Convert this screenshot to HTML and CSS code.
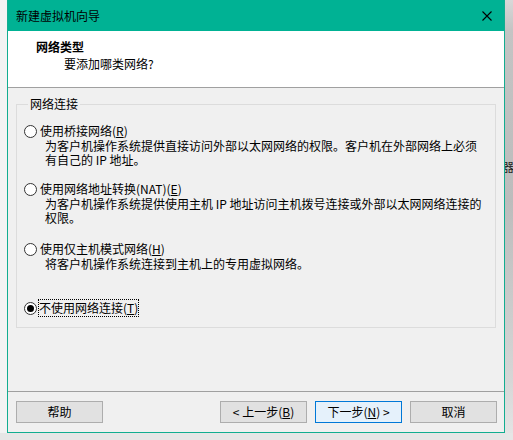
FILE: index.html
```html
<!DOCTYPE html>
<html lang="zh-CN">
<head>
<meta charset="utf-8">
<title>新建虚拟机向导</title>
<link rel="stylesheet" href="styles.css">
</head>
<body>
<div class="screen">
  <div class="left-strip"></div>
  <div class="window">
    <div class="titlebar">
      <span class="title">新建虚拟机向导</span>
      <svg class="close" width="10" height="10" viewBox="0 0 10 10"><path d="M0.5 0.5 L9.5 9.5 M9.5 0.5 L0.5 9.5" stroke="#000" stroke-width="1.1" fill="none"/></svg>
    </div>
    <div class="header">
      <div class="h-title">网络类型</div>
      <div class="h-sub">要添加哪类网络?</div>
    </div>
    <div class="body">
      <fieldset class="group">
        <legend>网络连接</legend>
        <div class="opt opt1">
          <div class="row"><span class="radio"></span><span class="lbl">使用桥接网络(<u>R</u>)</span></div>
          <div class="desc">为客户机操作系统提供直接访问外部以太网网络的权限。客户机在外部网络上必须<br>有自己的 IP 地址。</div>
        </div>
        <div class="opt opt2">
          <div class="row"><span class="radio"></span><span class="lbl">使用网络地址转换(NAT)(<u>E</u>)</span></div>
          <div class="desc">为客户机操作系统提供使用主机 IP 地址访问主机拨号连接或外部以太网网络连接的<br>权限。</div>
        </div>
        <div class="opt opt3">
          <div class="row"><span class="radio"></span><span class="lbl">使用仅主机模式网络(<u>H</u>)</span></div>
          <div class="desc">将客户机操作系统连接到主机上的专用虚拟网络。</div>
        </div>
        <div class="opt opt4">
          <div class="row"><span class="radio checked"></span><span class="lbl focus">不使用网络连接(<u>T</u>)</span></div>
        </div>
      </fieldset>
    </div>
    <div class="footer">
      <button class="btn">帮助</button>
      <span class="spacer"></span>
      <button class="btn">&lt; 上一步(<u>B</u>)</button>
      <button class="btn primary">下一步(<u>N</u>) &gt;</button>
      <button class="btn">取消</button>
    </div>
  </div>
  <div class="right-strip"><span class="frag">器</span></div>
</div>
</body>
</html>
```
FILE: styles.css
```css
* { box-sizing: border-box; }
html, body { margin: 0; padding: 0; }
body {
  width: 513px;
  height: 440px;
  overflow: hidden;
  background: #e6e6e6;
  font-family: "Noto Sans CJK SC", "Microsoft YaHei", sans-serif;
  font-size: 12px;
  line-height: 14px;
  color: #000;
}
.screen {
  display: flex;
  height: 433px;
}
.left-strip {
  width: 7px;
  background: #f3f3f3;
}
.right-strip {
  width: 8px;
  background: linear-gradient(#d8d8d8 0px, #c4c4c4 30px, #bcbcbc 200px, #d6d6d6 380px, #e4e4e4 433px);
  overflow: hidden;
  padding-top: 160px;
}
.frag {
  display: block;
  margin-left: -3px;
  font-size: 12px;
  line-height: 14px;
  color: #222;
}
.window {
  width: 499px;
  height: 433px;
  border: 1px solid #12ad90;
  border-top: none;
  background: #f0f0f0;
  display: flex;
  flex-direction: column;
}
.titlebar {
  height: 31px;
  background: #00b294;
  display: flex;
  align-items: center;
  padding: 0 12px 0 8px;
  flex: none;
}
.title { flex: 1; }
.close { display: block; margin-right: 0px; }
.header {
  height: 57px;
  background: #fff;
  border-bottom: 1px solid #a0a0a0;
  padding-top: 9px;
  flex: none;
}
.h-title {
  font-weight: bold;
  padding-left: 28px;
}
.h-sub {
  margin-top: 3px;
  padding-left: 56px;
}
.body {
  flex: 1;
  padding: 0 8px;
}
.group {
  margin: 9px 0 0 0;
  padding: 13px 0 12px 7px;
  border: 1px solid #dcdcdc;
  min-width: 0;
}
.group legend {
  padding: 0 2px;
  margin-left: 4px;
  line-height: 14px;
}
.row {
  display: flex;
  align-items: center;
  height: 14px;
}
.radio {
  width: 13px;
  height: 13px;
  border: 1px solid #333;
  border-radius: 50%;
  background: #fff;
  margin-right: 3px;
  flex: none;
  display: flex;
  align-items: center;
  justify-content: center;
}
.radio.checked::after {
  content: "";
  width: 7px;
  height: 7px;
  border-radius: 50%;
  background: #000;
}
.lbl { white-space: nowrap; }
.lbl.focus {
  outline: 1px dotted #000;
  outline-offset: 0;
  padding: 1px 0;
  margin-left: -1px;
}
.desc {
  margin-top: 1px;
  margin-left: 21px;
  white-space: nowrap;
}
.opt2 { margin-top: 15px; }
.opt3 { margin-top: 17px; }
.opt4 { margin-top: 30px; }
.footer {
  flex: none;
  height: 41px;
  border-top: 1px solid #a0a0a0;
  display: flex;
  align-items: flex-start;
  padding: 9px 7px 0 8px;
  gap: 8px;
}
.spacer { flex: 1; }
.btn {
  width: 87px;
  height: 22px;
  background: #e1e1e1;
  border: 1px solid #adadad;
  font-family: inherit;
  font-size: 12px;
  line-height: 14px;
  color: #000;
  padding: 0;
  margin: 0;
}
.btn.primary {
  background: #e5f1fb;
  border-color: #0078d7;
}
```
